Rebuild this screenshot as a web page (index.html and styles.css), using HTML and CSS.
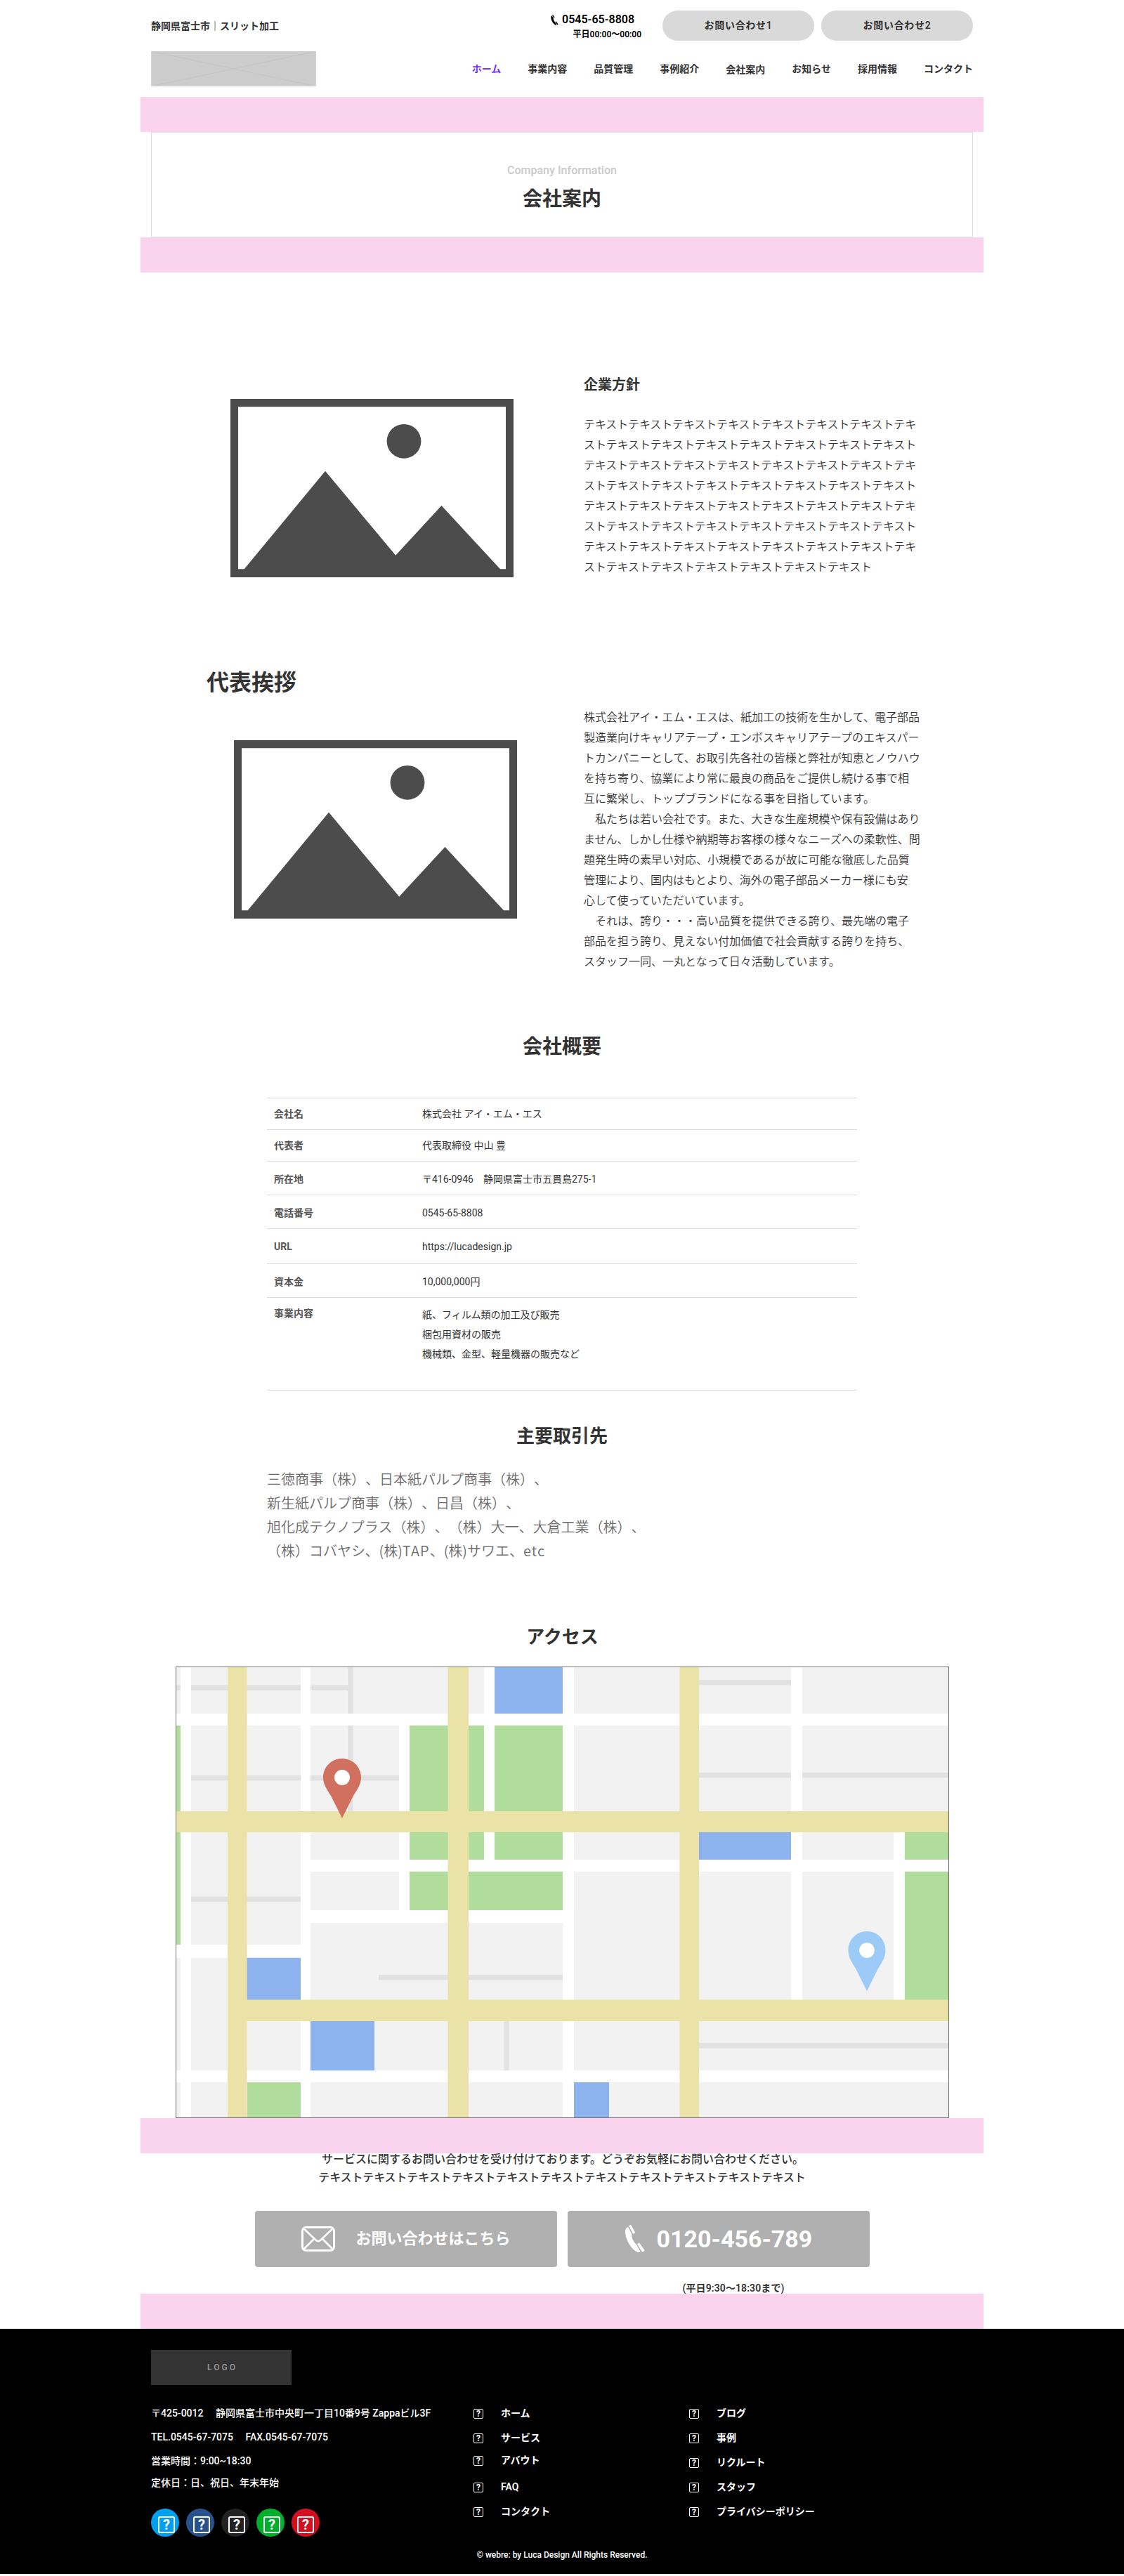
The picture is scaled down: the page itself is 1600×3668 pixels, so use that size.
FILE: index.html
```html
<!DOCTYPE html>
<html lang="ja">
<head>
<meta charset="utf-8">
<title>会社案内</title>
<link rel="stylesheet" href="styles.css">
</head>
<body>
<svg width="0" height="0" class="defs">
  <symbol id="phone" viewBox="0 0 28 40">
    <path d="M4 3 9.500 13.300C8.500 17 11.500 24 16 28L21.800 38.700C14 42 0 24 0 9 0 6 1.500 4 4 3Z"/>
    <path d="M5.300 2C5 1 7.800-.5 8.500.6L14 10.800C14.300 11.800 11.500 13.300 10.800 12.300ZM17.300 27.700C17 26.700 19.800 25.200 20.500 26.200L27.500 36C28 37 24.800 39 23.800 38.200Z"/>
  </symbol>
  <symbol id="photo" viewBox="0 0 403 254">
    <path fill-rule="evenodd" d="M0 0H403V254H0ZM11 11.300V242.300H19.700L135 102.800 235.200 222.700 300.500 152 384 242.300H392V11.300Z"/>
    <circle cx="247" cy="60.300" r="24.400"/>
  </symbol>
</svg>

<header class="header">
  <div class="brand">
    <p class="tagline">静岡県富士市｜スリット加工</p>
    <svg class="brand-logo" viewBox="0 0 235 50"><rect width="235" height="50" fill="#ccc"/><path d="M0 0 235 50M235 0 0 50" stroke="#c4c4c4" fill="none"/><path d="M0.500 0V50M234.500 0V50M0 49.500H235" stroke="#d4d4d4" fill="none"/></svg>
  </div>
  <div class="header-main">
    <div class="header-top">
      <div class="tel">
        <p class="tel-number"><svg class="tel-icon"><use href="#phone"/></svg>0545-65-8808</p>
        <p class="tel-hours">平日00:00〜00:00</p>
      </div>
      <a class="pill">お問い合わせ1</a>
      <a class="pill">お問い合わせ2</a>
    </div>
    <nav class="nav">
      <a class="current">ホーム</a><a>事業内容</a><a>品質管理</a><a>事例紹介</a><a class="low">会社案内</a><a>お知らせ</a><a>採用情報</a><a>コンタクト</a>
    </nav>
  </div>
</header>

<div class="band"></div>
<section class="hero">
  <p class="hero-en">Company Information</p>
  <h1>会社案内</h1>
</section>
<div class="band"></div>

<main>
  <section class="policy">
    <svg class="photo"><use href="#photo"/></svg>
    <div class="policy-text">
      <h2>企業方針</h2>
      <p class="prose tight">テキストテキストテキストテキストテキストテキストテキストテキ<br>ストテキストテキストテキストテキストテキストテキストテキスト<br>テキストテキストテキストテキストテキストテキストテキストテキ<br>ストテキストテキストテキストテキストテキストテキストテキスト<br>テキストテキストテキストテキストテキストテキストテキストテキ<br>ストテキストテキストテキストテキストテキストテキストテキスト<br>テキストテキストテキストテキストテキストテキストテキストテキ<br>ストテキストテキストテキストテキストテキストテキスト</p>
    </div>
  </section>

  <section class="greeting">
    <h2>代表挨拶</h2>
    <div class="greeting-row">
      <svg class="photo"><use href="#photo"/></svg>
      <p class="prose">株式会社アイ・エム・エスは、紙加工の技術を生かして、電子部品<br>製造業向けキャリアテープ・エンボスキャリアテープのエキスパー<br>トカンパニーとして、お取引先各社の皆様と弊社が知恵とノウハウ<br>を持ち寄り、協業により常に最良の商品をご提供し続ける事で相<br>互に繁栄し、トップブランドになる事を目指しています。<br>　私たちは若い会社です。また、大きな生産規模や保有設備はあり<br>ません、しかし仕様や納期等お客様の様々なニーズへの柔軟性、問<br>題発生時の素早い対応、小規模であるが故に可能な徹底した品質<br>管理により、国内はもとより、海外の電子部品メーカー様にも安<br>心して使っていただいています。<br>　それは、誇り・・・高い品質を提供できる誇り、最先端の電子<br>部品を担う誇り、見えない付加価値で社会貢献する誇りを持ち、<br>スタッフ一同、一丸となって日々活動しています。</p>
    </div>
  </section>

  <section class="outline">
    <h2>会社概要</h2>
    <dl>
      <div class="row"><dt>会社名</dt><dd>株式会社 アイ・エム・エス</dd></div>
      <div class="row"><dt>代表者</dt><dd>代表取締役 中山 豊</dd></div>
      <div class="row mid"><dt>所在地</dt><dd>〒416-0946　静岡県富士市五貫島275-1</dd></div>
      <div class="row mid"><dt>電話番号</dt><dd>0545-65-8808</dd></div>
      <div class="row tall"><dt class="latin">URL</dt><dd>https://lucadesign.jp</dd></div>
      <div class="row mid"><dt>資本金</dt><dd>10,000,000円</dd></div>
      <div class="row last"><dt>事業内容</dt><dd>紙、フィルム類の加工及び販売<br>梱包用資材の販売<br>機械類、金型、軽量機器の販売など</dd></div>
    </dl>
  </section>

  <section class="clients">
    <h2>主要取引先</h2>
    <p>三徳商事（株）、日本紙パルプ商事（株）、<br>新生紙パルプ商事（株）、日昌（株）、<br>旭化成テクノプラス（株）、（株）大一、大倉工業（株）、<br>（株）コバヤシ、(株)<span class="wide">TAP</span>、(株)サワエ、<span class="wide">etc</span></p>
  </section>

  <section class="access">
    <h2>アクセス</h2>
    <svg class="map" viewBox="250 2373 1101 643">
      <rect x="250" y="2373" width="1101" height="643" fill="#f2f2f2"/>
      <g fill="#e2e2e2">
        <path d="M250 2399.500H502V2407H250ZM495 2373H502.500V2600H495ZM272 2528H568V2535.500H272ZM272 2700.500H428V2708H272ZM539 2812H801V2819.500H539ZM717.500 2878H724.500V2948H717.500ZM994 2392H1126V2399.500H994ZM994 2524H1351V2531.500H994ZM994 2909H1351V2916.500H994Z"/>
      </g>
      <g fill="#b1dd9c">
        <path d="M250 2457H257V2769H250ZM583 2457H801V2720H583ZM1288 2600H1351V2850H1288ZM352 2965H428V3016H352Z"/>
      </g>
      <g fill="#8cb3ee">
        <path d="M704 2373H801V2440H704ZM350 2787.500H428V2850H350ZM442 2876H533V2948.500H442ZM990 2605H1126V2648H990ZM817 2965H867V3016H817Z"/>
      </g>
      <g fill="#fff">
        <path d="M257 2373H272V3016H257ZM428 2373H442V3016H428ZM568 2440H583V2738H568ZM689 2373H704V2665H689ZM801 2373H817V3016H801ZM1126 2373H1142V2850H1126ZM1272 2600H1287.500V2850H1272Z"/>
        <path d="M250 2440H1351V2457H250ZM442 2648H1351V2665H442ZM250 2769H442V2787.500H250ZM442 2720H817V2738H442ZM250 2948.500H1351V2965H250Z"/>
      </g>
      <g fill="#ebe2a8">
        <path d="M324 2373H351.500V3016H324ZM637.500 2373H667V3016H637.500ZM967.500 2373H995V3016H967.500ZM250 2579H1351V2609H250ZM324 2847.500H1351V2878H324Z"/>
      </g>
      <path fill="#d27060" d="M487 2504C502 2504 514 2516 514 2531 514 2541 508 2549 503 2557L487 2589 471 2557C466 2549 460 2541 460 2531 460 2516 472 2504 487 2504Z"/>
      <circle cx="487" cy="2531" r="11" fill="#fff"/>
      <path fill="#9dcbf7" d="M1234 2750C1249 2750 1260.500 2762 1260.500 2777 1260.500 2787 1255.500 2794 1250 2803L1234 2835 1218 2803C1212.500 2794 1207.500 2787 1207.500 2777 1207.500 2762 1219 2750 1234 2750Z"/>
      <circle cx="1234" cy="2777" r="10.800" fill="#fff"/>
      <rect x="250.500" y="2373.500" width="1100" height="642" fill="none" stroke="#707070"/>
    </svg>
  </section>
</main>

<div class="band"></div>
<section class="contact">
  <p class="contact-lead">サービスに関するお問い合わせを受け付けております。どうぞお気軽にお問い合わせください。<br><span class="tight">テキストテキストテキストテキストテキストテキストテキストテキストテキストテキストテキスト</span></p>
  <div class="contact-buttons">
    <a class="cta mail"><svg viewBox="0 0 48 36" width="48" height="36"><g fill="none" stroke="#fff" stroke-width="3" stroke-linejoin="round"><rect x="1.500" y="1.500" width="45" height="33" rx="5"/><path d="M3.500 3.500 21 20Q24 22.500 27 20L44.500 3.500M3.500 32.500 18 18M44.500 32.500 30 18" stroke-width="2.500"/></g></svg>お問い合わせはこちら</a>
    <a class="cta call"><svg class="cta-phone"><use href="#phone"/></svg>0120-456-789</a>
  </div>
  <p class="contact-hours">(平日9:30〜18:30まで)</p>
</section>
<div class="band"></div>

<footer class="footer">
  <div class="footer-inner">
    <div class="company">
      <div class="footer-logo">LOGO</div>
      <address>
        <p>〒425-0012　 静岡県富士市中央町一丁目10番9号 Zappaビル3F</p>
        <p>TEL.0545-67-7075　 FAX.0545-67-7075</p>
        <p>営業時間：9:00~18:30</p>
        <p>定休日：日、祝日、年末年始</p>
      </address>
      <div class="social">
        <a class="s1"><i>?</i></a><a class="s2"><i>?</i></a><a class="s3"><i>?</i></a><a class="s4"><i>?</i></a><a class="s5"><i>?</i></a>
      </div>
    </div>
    <ul class="links first">
      <li><i>?</i>ホーム</li><li><i>?</i>サービス</li><li><i>?</i>アバウト</li><li><i>?</i>FAQ</li><li><i>?</i>コンタクト</li>
    </ul>
    <ul class="links">
      <li><i>?</i>ブログ</li><li><i>?</i>事例</li><li><i>?</i>リクルート</li><li><i>?</i>スタッフ</li><li><i>?</i>プライバシーポリシー</li>
    </ul>
  </div>
  <p class="copyright">© webre: by Luca Design All Rights Reserved.</p>
</footer>
</body>
</html>
```
FILE: styles.css
```css
* { box-sizing: border-box; margin: 0; padding: 0; }
body {
  background: #fff;
  color: #333;
  font-family: Roboto, "Noto Sans CJK JP", sans-serif;
  font-size: 14px;
  line-height: 20px;
  text-spacing-trim: space-all;
}
.defs { position: absolute; }
svg { display: block; }
i { font-style: normal; }
ul { list-style: none; }

/* Header */
.header { display: flex; justify-content: space-between; width: 1170px; height: 138px; margin: 0 auto; }
.brand { padding-top: 27px; }
.tagline { font-weight: 600; }
.brand-logo { width: 235px; height: 50px; margin-top: 26px; }
.header-main { padding-top: 15px; }
.header-top { display: flex; justify-content: flex-end; gap: 10px; height: 43px; }
.tel { width: 129px; padding-top: 3px; margin-right: 20px; color: #000; }
.tel-number { display: flex; align-items: center; gap: 5px; font-size: 16px; font-weight: 600; }
.tel-icon { width: 11px; height: 15px; }
.tel-hours { margin-top: 1px; font-size: 12px; font-weight: 600; text-align: right; }
.pill { width: 216px; height: 43px; border-radius: 22px; background: #d9d9d9; font-weight: 600; letter-spacing: 0.7px; line-height: 43px; text-align: center; }
.nav { display: flex; gap: 38px; margin-top: 30px; font-weight: 600; }
.nav .current { color: #7433ff; }
.nav .low { padding-top: 1px; }

/* Spacer bands and page title */
.band { width: 1200px; height: 50px; margin: 0 auto; background: #fad4ef; }
.hero { width: 1170px; height: 150px; margin: 0 auto; padding-top: 42px; border: 1px solid #dcdfde; text-align: center; }
.hero-en { color: #ccc; font-size: 16px; font-weight: 600; line-height: 24px; }
.hero h1 { margin-top: 9px; font-size: 28px; font-weight: 600; line-height: 40px; }

h2 { font-weight: 600; }
.photo { flex: none; width: 403px; height: 254px; fill: #4c4c4c; }
.prose { font-size: 16px; font-weight: 350; line-height: 29px; }
.tight { letter-spacing: -0.12px; }

/* Company policy */
.policy { display: flex; gap: 100px; height: 546px; padding: 145px 0 0 328px; }
.policy .photo { margin-top: 35px; }
.policy h2 { margin-bottom: 27px; font-size: 20px; line-height: 30px; }

/* Greeting */
.greeting { height: 534px; padding: 14px 0 0 294px; }
.greeting h2 { font-size: 32px; line-height: 48px; }
.greeting-row { display: flex; gap: 95px; padding: 11px 0 0 39px; }
.greeting-row .photo { margin-top: 47px; }

/* Company outline */
.outline { width: 840px; height: 555px; margin: 0 auto; padding-top: 1px; }
.outline h2 { padding-bottom: 50px; font-size: 28px; line-height: 44px; text-align: center; }
.outline dl { border-bottom: 1px solid #dcdcdc; }
.row { display: grid; grid-template-columns: 211px 1fr; align-items: center; height: 45px; padding: 0 0 1px 10px; border-top: 1px solid #dcdcdc; }
.row.mid { height: 48px; padding: 2px 0 0 10px; }
.row.tall { height: 50px; padding: 1px 0 0 10px; }
.row.last { align-items: start; height: 132px; }
.row dt { color: #555; font-weight: 600; }
.row dt.latin { font-weight: 700; }
.row.last dt { padding-top: 12px; }
.row.last dd { padding-top: 10px; line-height: 28px; }

/* Clients */
.clients { width: 840px; height: 288px; margin: 0 auto; }
.clients h2 { padding-top: 2px; font-size: 26px; line-height: 40px; text-align: center; }
.clients p { padding-top: 24px; color: #6c6c6c; font-family: "Noto Sans CJK JP", sans-serif; font-size: 20px; font-weight: 350; line-height: 34px; }
.clients .wide { letter-spacing: 1.1px; }

/* Access map */
.access { width: 1101px; margin: 0 0 0 250px; }
.access h2 { height: 62px; font-size: 26px; line-height: 40px; text-align: center; }
.map { width: 1101px; height: 643px; }

/* Contact */
.contact { width: 875px; height: 200px; margin: 0 auto; padding-top: 1px; }
.contact-lead { margin-top: -5px; font-size: 16px; font-weight: 500; line-height: 26px; text-align: center; text-indent: 2px; white-space: nowrap; }
.contact-buttons { display: flex; gap: 15px; margin-top: 34px; }
.cta { display: flex; align-items: center; width: 430px; height: 80px; border-radius: 4px; background: #b0b0b0; color: #fff; }
.mail { gap: 30px; padding-left: 66px; font-size: 22px; font-weight: 600; }
.call { gap: 17px; padding-left: 82px; font-size: 34px; font-weight: 700; }
.cta-phone { width: 28px; height: 40px; fill: #fff; }
.contact-hours { margin-top: 20px; padding-left: 609px; font-weight: 600; letter-spacing: 0.1px; }

/* Footer */
.footer { height: 349px; margin-bottom: 3px; background: #000; color: #fff; }
.footer-inner { display: flex; width: 1170px; height: 312px; margin: 0 auto; padding-top: 30px; }
.company { width: 459px; }
.footer-logo { width: 200px; height: 50px; background: #333; color: #999; font-size: 12px; font-weight: 500; letter-spacing: 3px; line-height: 51px; text-align: center; text-indent: 3px; }
address { display: grid; grid-template-rows: 34px 34px 31px 20px; margin-top: 30px; font-style: normal; font-weight: 500; }
.social { display: flex; gap: 10px; margin-top: 27px; }
.social a { display: flex; align-items: flex-end; width: 40px; height: 40px; padding: 0 0 5px 10px; border-radius: 50%; }
.social .s5 { padding-left: 8px; }
.social i { width: 24px; height: 24px; border: 2px solid #fff; border-radius: 3px; font-size: 20px; font-weight: 700; line-height: 21px; text-align: center; }
.s1 { background: #00a0f0; }
.s2 { background: #28528c; }
.s3 { background: #222; }
.s4 { background: #00b02b; }
.s5 { background: #d4101e; }
.links { display: grid; grid-template-rows: 35px 35px 35px 35px 20px; align-content: start; width: 307px; padding-top: 80px; font-weight: 600; }
.links.first { grid-template-rows: 35px 32px 38px 35px 20px; }
.links li { display: flex; height: 20px; }
.links i { width: 14px; height: 14px; margin: 4px 25px 0 0; border: 1px solid #fff; border-radius: 2px; font-size: 12px; font-weight: 700; line-height: 12px; text-align: center; }
.copyright { font-size: 12px; font-weight: 500; text-align: center; }
```
